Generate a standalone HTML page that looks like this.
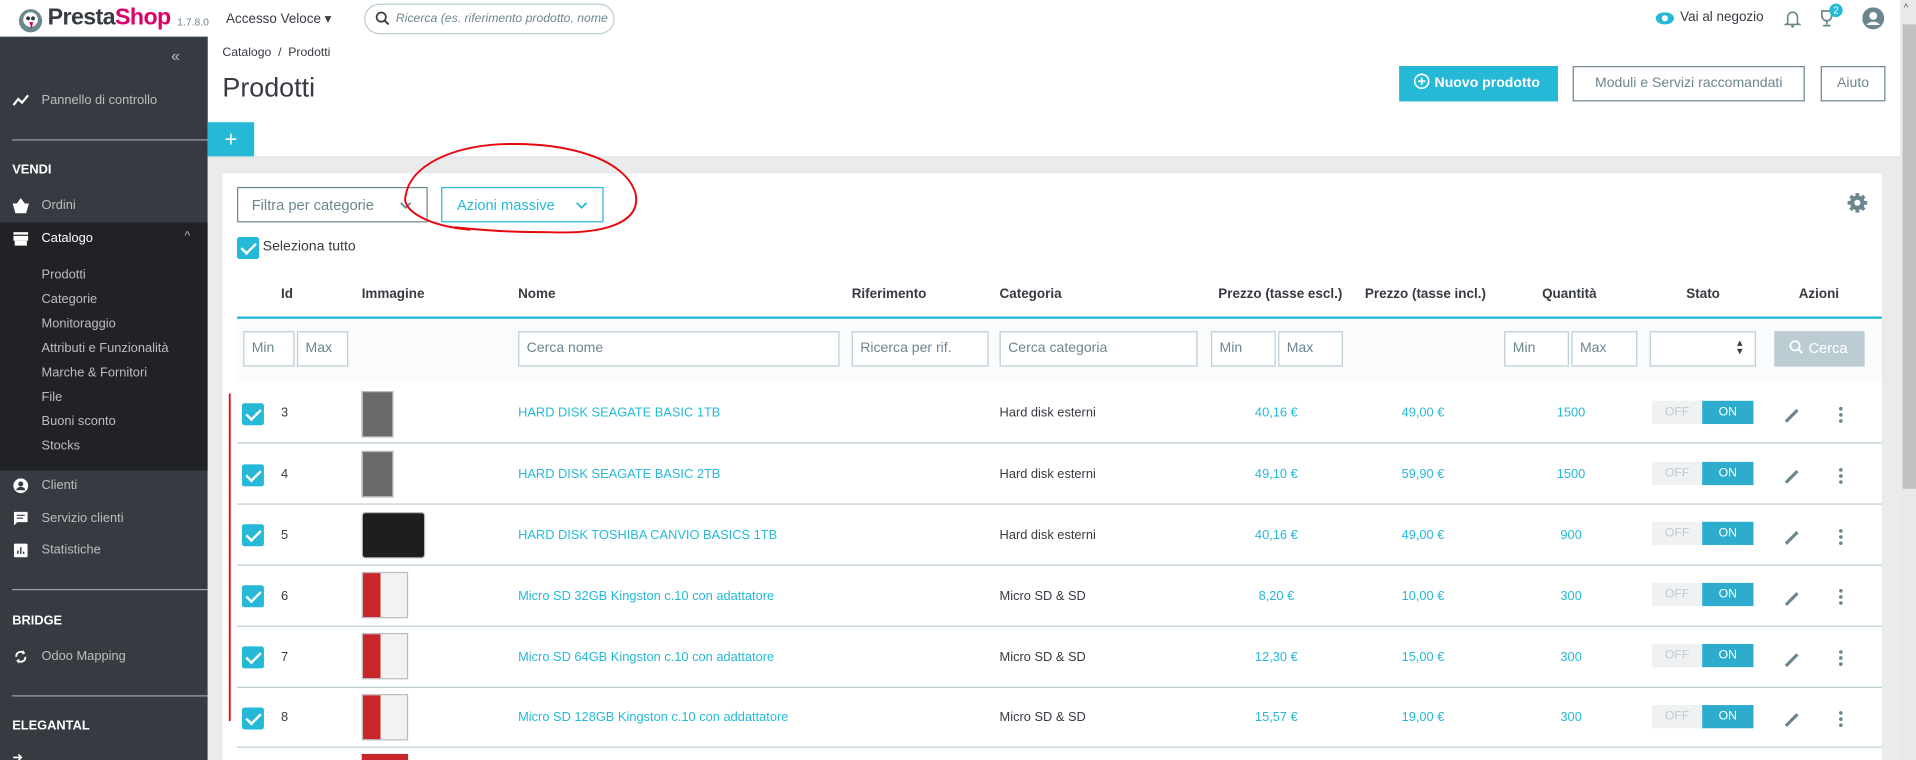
<!DOCTYPE html>
<html><head><meta charset="utf-8"><style>
*{box-sizing:border-box;margin:0;padding:0}
html,body{width:1916px;height:760px;overflow:hidden;background:#fff}
#w{position:absolute;left:0;top:0;width:1568px;height:622px;transform:scale(1.22194);transform-origin:0 0;font-family:"Liberation Sans",sans-serif;color:#363a41;overflow:hidden;background:#fff}
.a{position:absolute;white-space:nowrap}
.sb{position:absolute;left:0;top:30px;width:170px;height:592px;background:#363a41}
.sbd{position:absolute;left:0;top:182px;width:170px;height:203px;background:#202226}
.si{position:absolute;left:34px;color:#bebebe;font-size:10.5px}
.sh{position:absolute;left:10px;color:#fff;font-weight:bold;font-size:10.5px}
.ic{position:absolute;left:10px;width:14px;height:13px}
.hr{position:absolute;left:10px;width:160px;height:1px;background:#9aa3ab}
.inp{position:absolute;height:29px;border:1px solid #bbcdd2;background:#fff;color:#6c868e;font-size:11.5px;padding:7px 6px}
.th{position:absolute;top:235px;font-weight:bold;font-size:11px;color:#363a41}
.row{position:absolute;left:194px;width:1346px;height:50px;border-bottom:1px solid #bbcdd2}
.cb{position:absolute;width:18px;height:18px;background:#25b9d7;border-radius:2px}
.cb:after{content:"";position:absolute;left:6px;top:2px;width:5px;height:10px;border:solid #fff;border-width:0 2px 2px 0;transform:rotate(45deg)}
.lk{color:#25b9d7;font-size:10.5px}
.tx{font-size:10.5px}
.tg{position:absolute;width:83px;height:19px;font-size:10px}
.tg .o{position:absolute;left:0;top:0;width:41px;height:19px;background:#eff1f2;color:#bbcdd2;text-align:center;line-height:19px}
.tg .n{position:absolute;left:41px;top:0;width:42px;height:19px;background:#2eacce;color:#fff;text-align:center;line-height:19px}
.dot{position:absolute;width:3px;height:3px;border-radius:50%;background:#6c868e}
</style></head><body><div id="w">
<!-- header -->
<svg class="a" style="left:15px;top:7px" width="20" height="20" viewBox="0 0 20 20"><circle cx="10" cy="10" r="9.5" fill="#6c868e"/><circle cx="10" cy="9" r="6" fill="#fff"/><circle cx="8" cy="8" r="1.6" fill="#363a41"/><circle cx="12" cy="8" r="1.6" fill="#363a41"/><path d="M9 11 L12 11 L11 17 Z" fill="#df0067"/></svg>
<div class="a" style="left:39px;top:4px;font-size:19px;font-weight:bold;color:#363a41;letter-spacing:-.5px">Presta<span style="color:#df0067">Shop</span></div>
<div class="a" style="left:145px;top:13px;font-size:8.5px;color:#6c868e">1.7.8.0</div>
<div class="a" style="left:185px;top:9px;font-size:11px;color:#363a41">Accesso Veloce ▾</div>
<div class="a" style="left:298px;top:3px;width:205px;height:25px;border:1px solid #bbcdd2;border-radius:13px"></div>
<svg class="a" style="left:307px;top:9px" width="12" height="12" viewBox="0 0 12 12"><circle cx="5" cy="5" r="3.8" fill="none" stroke="#363a41" stroke-width="1.4"/><path d="M8 8 L11 11" stroke="#363a41" stroke-width="1.6"/></svg>
<div class="a" style="left:324px;top:10px;font-size:10px;font-style:italic;color:#6c868e">Ricerca (es. riferimento prodotto, nome</div>
<svg class="a" style="left:1355px;top:10px" width="15" height="10" viewBox="0 0 15 10"><ellipse cx="7.5" cy="5" rx="7.5" ry="5" fill="#25b9d7"/><circle cx="7.5" cy="5" r="2.5" fill="#fff"/></svg>
<div class="a" style="left:1375px;top:8px;font-size:11px;color:#363a41">Vai al negozio</div>
<svg class="a" style="left:1460px;top:7px" width="14" height="16" viewBox="0 0 14 16"><path d="M3 12 V7 a4 4 0 0 1 8 0 V12 L12.5 13 H1.5 Z" fill="none" stroke="#6c868e" stroke-width="1.3"/><circle cx="7" cy="14.5" r="1.2" fill="#6c868e"/></svg>
<svg class="a" style="left:1488px;top:7px" width="16" height="16" viewBox="0 0 16 16"><path d="M3 2 H11 V6 a4 4 0 0 1 -8 0 Z M7 10 V13 M4 14 H10" fill="none" stroke="#6c868e" stroke-width="1.4"/></svg>
<div class="a" style="left:1497px;top:3px;width:11px;height:11px;border-radius:50%;background:#25b9d7;color:#fff;font-size:8px;text-align:center;line-height:11px">2</div>
<svg class="a" style="left:1524px;top:6px" width="18" height="18" viewBox="0 0 18 18"><circle cx="9" cy="9" r="9" fill="#6c868e"/><circle cx="9" cy="7" r="3.2" fill="#fff"/><path d="M3.5 14.5 a6 4.5 0 0 1 11 0" fill="#fff"/></svg>
<!-- sidebar -->
<div class="sb"></div><div class="sbd"></div>
<div class="a" style="left:140px;top:38px;color:#bebebe;font-size:13px">«</div>
<svg class="a" style="left:10px;top:77px" width="14" height="10" viewBox="0 0 14 10"><path d="M1 9 L5 4 L8 7 L13 1" fill="none" stroke="#fff" stroke-width="1.8"/></svg>
<div class="si" style="top:76px">Pannello di controllo</div>
<div class="hr" style="top:114px"></div>
<div class="sh" style="top:133px">VENDI</div>
<svg class="ic" style="top:162px" viewBox="0 0 14 13"><path d="M1 5 H13 L11 12 H3 Z M4 5 L7 1 L10 5" fill="#fff" stroke="#fff"/></svg>
<div class="si" style="top:162px">Ordini</div>
<svg class="ic" style="top:189px" viewBox="0 0 14 13"><rect x="1" y="1" width="12" height="2" fill="#fff"/><rect x="1" y="4" width="12" height="4" fill="#fff"/><rect x="2" y="8" width="10" height="4" fill="#fff"/></svg>
<div class="si" style="top:189px;color:#fff">Catalogo</div>
<div class="a" style="left:151px;top:188px;color:#bebebe;font-size:10px">^</div>
<div class="si" style="top:219px">Prodotti</div>
<div class="si" style="top:239px">Categorie</div>
<div class="si" style="top:259px">Monitoraggio</div>
<div class="si" style="top:279px">Attributi e Funzionalità</div>
<div class="si" style="top:299px">Marche &amp; Fornitori</div>
<div class="si" style="top:319px">File</div>
<div class="si" style="top:339px">Buoni sconto</div>
<div class="si" style="top:359px">Stocks</div>
<svg class="ic" style="top:391px" viewBox="0 0 14 14"><circle cx="7" cy="7" r="6.5" fill="#fff"/><circle cx="7" cy="5.5" r="2.2" fill="#363a41"/><path d="M3 11 a4 3 0 0 1 8 0" fill="#363a41"/></svg>
<div class="si" style="top:391px">Clienti</div>
<svg class="ic" style="top:418px" viewBox="0 0 14 14"><path d="M1 1 H13 V10 H4 L1 13 Z" fill="#fff"/><path d="M3.5 4 H10.5 M3.5 6.5 H9" stroke="#363a41"/></svg>
<div class="si" style="top:418px">Servizio clienti</div>
<svg class="ic" style="top:444px" viewBox="0 0 14 14"><rect x="1" y="1" width="12" height="12" rx="1" fill="#fff"/><path d="M4.5 10 V7 M7 10 V4 M9.5 10 V8" stroke="#363a41" stroke-width="1.3"/></svg>
<div class="si" style="top:444px">Statistiche</div>
<div class="hr" style="top:482px"></div>
<div class="sh" style="top:502px">BRIDGE</div>
<svg class="ic" style="top:531px" viewBox="0 0 14 14"><path d="M3 7 a4 4 0 0 1 7 -3 M11 7 a4 4 0 0 1 -7 3" fill="none" stroke="#fff" stroke-width="1.6"/><path d="M9 1 L11 4 L8 5 Z M5 13 L3 10 L6 9 Z" fill="#fff"/></svg>
<div class="si" style="top:531px">Odoo Mapping</div>
<div class="hr" style="top:569px"></div>
<div class="sh" style="top:588px">ELEGANTAL</div>
<div class="si" style="top:614px;left:10px;color:#fff">➜</div>
<!-- content header -->
<div class="a" style="left:182px;top:38px;font-size:10px">Catalogo &nbsp;/ &nbsp;Prodotti</div>
<div class="a" style="left:182px;top:59px;font-size:22px;color:#363a41">Prodotti</div>
<div class="a" style="left:1145px;top:54px;width:130px;height:29px;background:#25b9d7;color:#fff;font-size:11.5px;font-weight:bold;line-height:29px;padding-left:12px"><svg width="13" height="13" viewBox="0 0 13 13" style="vertical-align:-2px;margin-right:4px"><circle cx="6.5" cy="6.5" r="5.7" fill="none" stroke="#fff" stroke-width="1.3"/><path d="M6.5 3.5 V9.5 M3.5 6.5 H9.5" stroke="#fff" stroke-width="1.4"/></svg>Nuovo prodotto</div>
<div class="a" style="left:1287px;top:54px;width:190px;height:29px;border:1px solid #6c868e;color:#6c868e;font-size:11.5px;text-align:center;line-height:27px">Moduli e Servizi raccomandati</div>
<div class="a" style="left:1490px;top:54px;width:53px;height:29px;border:1px solid #6c868e;color:#6c868e;font-size:11.5px;text-align:center;line-height:27px">Aiuto</div>
<div class="a" style="left:170px;top:100px;width:38px;height:28px;background:#25b9d7;color:#fff;font-size:18px;text-align:center;line-height:28px">+</div>
<div class="a" style="left:170px;top:128px;width:1385px;height:494px;background:#eaebec;border-top:1px solid #dcdfe2"></div>
<div class="a" style="left:1555px;top:0;width:13px;height:622px;background:#e9e9e9"></div>
<div class="a" style="left:1557px;top:20px;width:11px;height:380px;background:#c1c1c1"></div>
<div class="a" style="left:1558px;top:2px;font-size:8px;color:#505050">^</div>
<div class="a" style="left:182px;top:142px;width:1358px;height:480px;background:#fff"></div>
<!-- toolbar -->
<div class="a" style="left:194px;top:153px;width:156px;height:29px;border:1px solid #6c868e;color:#6c868e;font-size:12px;padding:7px 11px">Filtra per categorie</div>
<svg class="a" style="left:327px;top:165px" width="10" height="7" viewBox="0 0 10 7"><path d="M1 1 L5 5 L9 1" fill="none" stroke="#6c868e" stroke-width="1.5"/></svg>
<div class="a" style="left:361px;top:153px;width:133px;height:29px;border:1px solid #25b9d7;color:#25b9d7;font-size:12px;padding:7px 12px">Azioni massive</div>
<svg class="a" style="left:471px;top:165px" width="10" height="7" viewBox="0 0 10 7"><path d="M1 1 L5 5 L9 1" fill="none" stroke="#25b9d7" stroke-width="1.5"/></svg>
<svg class="a" style="left:1511px;top:157px" width="18" height="18" viewBox="0 0 18 18"><g fill="#6c868e"><circle cx="9" cy="9" r="6"/><rect x="7.5" y="1" width="3" height="16"/><rect x="1" y="7.5" width="16" height="3"/><rect x="7.5" y="1" width="3" height="16" transform="rotate(45 9 9)"/><rect x="7.5" y="1" width="3" height="16" transform="rotate(-45 9 9)"/></g><circle cx="9" cy="9" r="2.5" fill="#fff"/></svg>
<div class="cb" style="left:194px;top:194px"></div>
<div class="a" style="left:215px;top:196px;font-size:11.5px">Seleziona tutto</div>
<!-- table header -->
<div class="th" style="left:230px">Id</div>
<div class="th" style="left:296px">Immagine</div>
<div class="th" style="left:424px">Nome</div>
<div class="th" style="left:697px">Riferimento</div>
<div class="th" style="left:818px">Categoria</div>
<div class="th" style="left:997px">Prezzo (tasse escl.)</div>
<div class="th" style="left:1117px">Prezzo (tasse incl.)</div>
<div class="th" style="left:1262px">Quantità</div>
<div class="th" style="left:1380px">Stato</div>
<div class="th" style="left:1472px">Azioni</div>
<div class="a" style="left:194px;top:259px;width:1346px;height:2px;background:#25b9d7"></div>
<div class="a" style="left:194px;top:261px;width:1346px;height:51px;background:#fafbfc"></div>
<div class="inp" style="left:199px;top:271px;width:42px">Min</div>
<div class="inp" style="left:243px;top:271px;width:42px">Max</div>
<div class="inp" style="left:424px;top:271px;width:263px">Cerca nome</div>
<div class="inp" style="left:697px;top:271px;width:112px">Ricerca per rif.</div>
<div class="inp" style="left:818px;top:271px;width:162px">Cerca categoria</div>
<div class="inp" style="left:991px;top:271px;width:53px">Min</div>
<div class="inp" style="left:1046px;top:271px;width:53px">Max</div>
<div class="inp" style="left:1231px;top:271px;width:53px">Min</div>
<div class="inp" style="left:1286px;top:271px;width:54px">Max</div>
<div class="inp" style="left:1350px;top:271px;width:87px"><span style="position:absolute;right:10px;top:5px;font-size:9px;color:#363a41;line-height:7px">▴<br>▾</span></div>
<div class="a" style="left:1452px;top:271px;width:74px;height:29px;background:#bbcdd2;color:#fff;font-size:12px;line-height:29px;padding-left:12px"><svg width="12" height="12" viewBox="0 0 12 12" style="vertical-align:-1px;margin-right:4px"><circle cx="5" cy="5" r="3.8" fill="none" stroke="#fff" stroke-width="1.4"/><path d="M8 8 L11 11" stroke="#fff" stroke-width="1.6"/></svg>Cerca</div>
<!-- rows -->
<div class="row" style="top:313px"></div><div class="row" style="top:363px"></div><div class="row" style="top:413px"></div><div class="row" style="top:463px"></div><div class="row" style="top:513px"></div><div class="row" style="top:562px"></div>

<div class="cb" style="left:198px;top:330px"></div><div class="a tx" style="left:230px;top:332px">3</div>
<div class="a" style="left:296px;top:320px;width:26px;height:38px;background:#6a6a6a;border:1px solid #bbb"></div>
<div class="a lk" style="left:424px;top:332px">HARD DISK SEAGATE BASIC 1TB</div><div class="a tx" style="left:818px;top:332px">Hard disk esterni</div>
<div class="a lk" style="left:1027px;top:332px">40,16 €</div><div class="a lk" style="left:1147px;top:332px">49,00 €</div><div class="a lk" style="left:1274px;top:332px">1500</div>

<div class="cb" style="left:198px;top:380px"></div><div class="a tx" style="left:230px;top:382px">4</div>
<div class="a" style="left:296px;top:369px;width:26px;height:38px;background:#6a6a6a;border:1px solid #bbb"></div>
<div class="a lk" style="left:424px;top:382px">HARD DISK SEAGATE BASIC 2TB</div><div class="a tx" style="left:818px;top:382px">Hard disk esterni</div>
<div class="a lk" style="left:1027px;top:382px">49,10 €</div><div class="a lk" style="left:1147px;top:382px">59,90 €</div><div class="a lk" style="left:1274px;top:382px">1500</div>

<div class="cb" style="left:198px;top:429px"></div><div class="a tx" style="left:230px;top:432px">5</div>
<div class="a" style="left:296px;top:419px;width:52px;height:38px;background:#1e1e1e;border:1px solid #bbb;border-radius:3px"></div>
<div class="a lk" style="left:424px;top:432px">HARD DISK TOSHIBA CANVIO BASICS 1TB</div><div class="a tx" style="left:818px;top:432px">Hard disk esterni</div>
<div class="a lk" style="left:1027px;top:432px">40,16 €</div><div class="a lk" style="left:1147px;top:432px">49,00 €</div><div class="a lk" style="left:1277px;top:432px">900</div>

<div class="cb" style="left:198px;top:479px"></div><div class="a tx" style="left:230px;top:482px">6</div>
<div class="a" style="left:296px;top:468px;width:38px;height:38px;background:linear-gradient(90deg,#c8262a 0 40%,#f2f2f2 40%);border:1px solid #bbb"></div>
<div class="a lk" style="left:424px;top:482px">Micro SD 32GB Kingston c.10 con adattatore</div><div class="a tx" style="left:818px;top:482px">Micro SD &amp; SD</div>
<div class="a lk" style="left:1030px;top:482px">8,20 €</div><div class="a lk" style="left:1147px;top:482px">10,00 €</div><div class="a lk" style="left:1277px;top:482px">300</div>

<div class="cb" style="left:198px;top:529px"></div><div class="a tx" style="left:230px;top:532px">7</div>
<div class="a" style="left:296px;top:518px;width:38px;height:38px;background:linear-gradient(90deg,#c8262a 0 40%,#f2f2f2 40%);border:1px solid #bbb"></div>
<div class="a lk" style="left:424px;top:532px">Micro SD 64GB Kingston c.10 con adattatore</div><div class="a tx" style="left:818px;top:532px">Micro SD &amp; SD</div>
<div class="a lk" style="left:1027px;top:532px">12,30 €</div><div class="a lk" style="left:1147px;top:532px">15,00 €</div><div class="a lk" style="left:1277px;top:532px">300</div>

<div class="cb" style="left:198px;top:579px"></div><div class="a tx" style="left:230px;top:581px">8</div>
<div class="a" style="left:296px;top:568px;width:38px;height:38px;background:linear-gradient(90deg,#c8262a 0 40%,#f2f2f2 40%);border:1px solid #bbb"></div>
<div class="a lk" style="left:424px;top:581px">Micro SD 128GB Kingston c.10 con addattatore</div><div class="a tx" style="left:818px;top:581px">Micro SD &amp; SD</div>
<div class="a lk" style="left:1027px;top:581px">15,57 €</div><div class="a lk" style="left:1147px;top:581px">19,00 €</div><div class="a lk" style="left:1277px;top:581px">300</div>
<div class="a" style="left:296px;top:617px;width:38px;height:10px;background:#c8262a"></div>

<div class="tg" style="left:1352px;top:328px"><div class="o">OFF</div><div class="n">ON</div></div>
<div class="tg" style="left:1352px;top:378px"><div class="o">OFF</div><div class="n">ON</div></div>
<div class="tg" style="left:1352px;top:427px"><div class="o">OFF</div><div class="n">ON</div></div>
<div class="tg" style="left:1352px;top:477px"><div class="o">OFF</div><div class="n">ON</div></div>
<div class="tg" style="left:1352px;top:527px"><div class="o">OFF</div><div class="n">ON</div></div>
<div class="tg" style="left:1352px;top:577px"><div class="o">OFF</div><div class="n">ON</div></div>

<svg class="a" style="left:1460px;top:330px" width="14" height="270" viewBox="0 0 14 270"><g stroke="#6c868e" stroke-width="2.6"><path d="M1.5 15 L11 5.5"/><path d="M1.5 65 L11 55.5"/><path d="M1.5 115 L11 105.5"/><path d="M1.5 165 L11 155.5"/><path d="M1.5 215 L11 205.5"/><path d="M1.5 264 L11 254.5"/></g></svg>
<div class="dot" style="left:1505px;top:333px"></div><div class="dot" style="left:1505px;top:338px"></div><div class="dot" style="left:1505px;top:343px"></div>
<div class="dot" style="left:1505px;top:383px"></div><div class="dot" style="left:1505px;top:388px"></div><div class="dot" style="left:1505px;top:393px"></div>
<div class="dot" style="left:1505px;top:433px"></div><div class="dot" style="left:1505px;top:438px"></div><div class="dot" style="left:1505px;top:443px"></div>
<div class="dot" style="left:1505px;top:482px"></div><div class="dot" style="left:1505px;top:487px"></div><div class="dot" style="left:1505px;top:492px"></div>
<div class="dot" style="left:1505px;top:532px"></div><div class="dot" style="left:1505px;top:537px"></div><div class="dot" style="left:1505px;top:542px"></div>
<div class="dot" style="left:1505px;top:582px"></div><div class="dot" style="left:1505px;top:587px"></div><div class="dot" style="left:1505px;top:592px"></div>
<!-- red annotations -->
<svg class="a" style="left:0;top:0" width="1568" height="622"><path d="M385 188 C 350 185, 328 172, 332 160 C 336 135, 370 120, 410 118 C 470 116, 512 132, 520 158 C 525 180, 500 192, 450 190 C 420 190, 400 189, 372 186" fill="none" stroke="#e8080e" stroke-width="1.6"/><path d="M188 322 L188 590" stroke="#e8080e" stroke-width="1.5"/></svg>
</div></body></html>
